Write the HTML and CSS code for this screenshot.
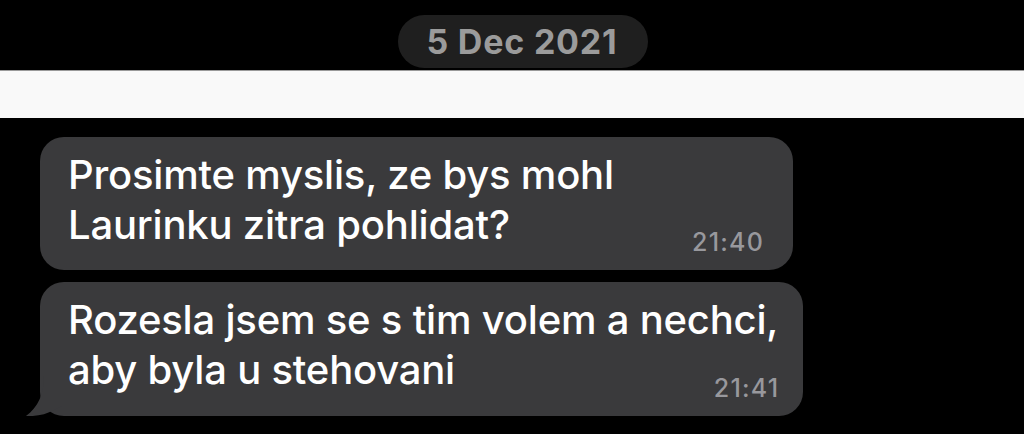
FILE: index.html
```html
<!DOCTYPE html>
<html lang="cs">
<head>
<meta charset="utf-8">
<title>Chat</title>
<link rel="stylesheet" href="styles.css">
</head>
<body>
  <header class="date-row">
    <div class="date-pill">5 Dec 2021</div>
  </header>
  <div class="band"></div>
  <main class="messages">
    <div class="bubble bubble-first">
      <p class="text">Prosimte myslis, ze bys mohl<br>Laurinku zitra pohlidat?</p>
      <span class="time">21:40</span>
    </div>
    <div class="bubble bubble-last">
      <p class="text">Rozesla jsem se s tim volem a nechci,<br>aby byla u stehovani</p>
      <span class="time">21:41</span>
      <svg class="tail" width="42" height="40" viewBox="0 0 42 40" aria-hidden="true">
        <path d="M22 0 C22 18 16 31 4 40 C14 40.6 24 38.5 32 34 L42 29 L42 0 Z" fill="#3a3a3c"/>
      </svg>
    </div>
  </main>
</body>
</html>
```
FILE: styles.css
```css
* { box-sizing: border-box; }

html, body {
  margin: 0;
  padding: 0;
  background: #000;
  height: 434px;
  overflow: hidden;
}

body {
  font-family: Inter, "Liberation Sans", sans-serif;
  color: #fff;
}

.date-row {
  height: 70px;
  display: flex;
  justify-content: center;
  align-items: flex-start;
  padding-top: 15px;
  padding-left: 22px;
}

.date-pill {
  width: 250px;
  height: 53px;
  border-radius: 27px;
  background: #1f1f1f;
  color: #9b9b9b;
  font-weight: 700;
  font-size: 34px;
  display: flex;
  align-items: center;
  justify-content: center;
  letter-spacing: 0.8px;
  padding-right: 2px;
}

.band {
  height: 48px;
  background: #f9f9f9;
  border-top: 1px solid #9a9a9a;
}

.messages {
  display: flex;
  flex-direction: column;
  align-items: flex-start;
  gap: 12px;
  padding: 19px 0 0 40px;
}

.bubble {
  position: relative;
  display: grid;
  background: #3a3a3c;
  border-radius: 24px;
  padding: 13px 30px 18px 28px;
}

.bubble-first { width: 753px; height: 133px; }
.bubble-last { width: 763px; height: 134px; }

.text {
  grid-area: 1 / 1;
  margin: 0;
  font-size: 40px;
  font-weight: 500;
  line-height: 50px;
  letter-spacing: -0.2px;
  white-space: nowrap;
}

.time {
  grid-area: 1 / 1;
  justify-self: end;
  align-self: end;
  font-size: 25px;
  font-weight: 500;
  line-height: 25px;
  color: #98989d;
  letter-spacing: 1.2px;
  margin-bottom: -3px;
  margin-right: -1px;
}

.tail {
  position: absolute;
  left: -18px;
  bottom: 0;
}
```
